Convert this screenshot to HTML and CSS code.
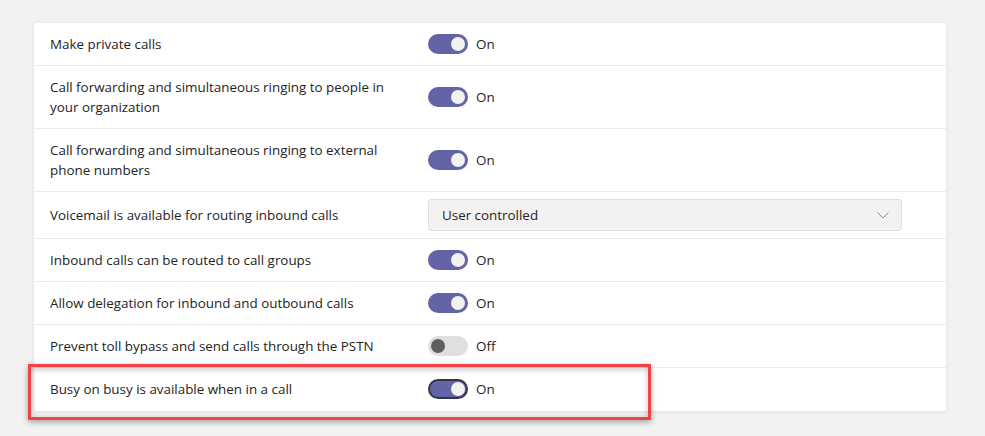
FILE: index.html
```html
<!DOCTYPE html>
<html lang="en">
<head>
  <meta charset="UTF-8" />
  <title>Calling policy</title>
  <link rel="stylesheet" href="styles.css">
</head>
<body>
  <div class="page">
    <div class="card">
      <div class="row">
        <div class="label">Make private calls</div>
        <div class="control"><span class="toggle on"></span><span class="state">On</span></div>
      </div>
      <div class="row">
        <div class="label">Call forwarding and simultaneous ringing to people in your organization</div>
        <div class="control"><span class="toggle on"></span><span class="state">On</span></div>
      </div>
      <div class="row">
        <div class="label">Call forwarding and simultaneous ringing to external phone numbers</div>
        <div class="control"><span class="toggle on"></span><span class="state">On</span></div>
      </div>
      <div class="row row-select">
        <div class="label">Voicemail is available for routing inbound calls</div>
        <div class="control">
          <div class="dropdown">
            <span>User controlled</span>
            <svg class="chevron" width="12" height="7" viewBox="0 0 12 7"><path d="M0.5 0.5 L6 6 L11.5 0.5" fill="none" stroke="#8a8886" stroke-width="1"/></svg>
          </div>
        </div>
      </div>
      <div class="row">
        <div class="label">Inbound calls can be routed to call groups</div>
        <div class="control"><span class="toggle on"></span><span class="state">On</span></div>
      </div>
      <div class="row">
        <div class="label">Allow delegation for inbound and outbound calls</div>
        <div class="control"><span class="toggle on"></span><span class="state">On</span></div>
      </div>
      <div class="row">
        <div class="label">Prevent toll bypass and send calls through the PSTN</div>
        <div class="control"><span class="toggle off"></span><span class="state">Off</span></div>
      </div>
      <div class="row last">
        <div class="label">Busy on busy is available when in a call</div>
        <div class="control"><span class="toggle on focus"></span><span class="state">On</span></div>
        <div class="highlight"></div>
      </div>
    </div>
  </div>
</body>
</html>
```

FILE: styles.css
```css
body {
  margin: 0;
  background: #f3f2f1;
  font-family: "Open Sans", "Segoe UI", sans-serif;
  font-size: 13.4px;
  color: #252423;
}
.page {
  padding: 23px 39px 25px 34px;
}
.card {
  background: #fff;
  border-radius: 3px;
  box-shadow: 0 1px 4px rgba(0,0,0,0.08);
}
.row {
  display: grid;
  grid-template-columns: 362px 1fr;
  column-gap: 16px;
  align-items: center;
  padding: 11px 44px 11px 16px;
  line-height: 20px;
  border-bottom: 1px solid #edebe9;
  position: relative;
}
.row.last {
  border-bottom: none;
  padding-bottom: 12px;
}
.row-select {
  padding-top: 7px;
  padding-bottom: 7px;
}
.control {
  display: flex;
  align-items: center;
}
.toggle {
  box-sizing: border-box;
  width: 40px;
  height: 20px;
  border-radius: 10px;
  position: relative;
  display: inline-block;
}
.toggle::after {
  content: "";
  position: absolute;
  top: 3px;
  width: 14px;
  height: 14px;
  border-radius: 50%;
}
.toggle.on {
  background: #6264a7;
}
.toggle.on::after {
  right: 3px;
  background: #f3f2f1;
}
.toggle.off {
  background: #e1dfdd;
}
.toggle.off::after {
  left: 3px;
  background: #605e5c;
}
.toggle.focus {
  border: 2px solid #33344a;
}
.toggle.focus::after {
  top: 1px;
  right: 1px;
}
.state {
  margin-left: 8px;
}
.dropdown {
  box-sizing: border-box;
  flex: 1;
  height: 32px;
  display: flex;
  align-items: center;
  justify-content: space-between;
  padding: 0 12px 0 13px;
  background: #f3f2f1;
  border: 1px solid #e1dfdd;
  border-radius: 3px;
}
.chevron {
  display: block;
}
.highlight {
  position: absolute;
  left: -6px;
  top: -4px;
  width: 617px;
  height: 50px;
  border: 3px solid #ef4349;
  box-shadow: 0 2px 6px rgba(0,0,0,0.35), inset 0 2px 6px rgba(0,0,0,0.25);
  pointer-events: none;
}
```
